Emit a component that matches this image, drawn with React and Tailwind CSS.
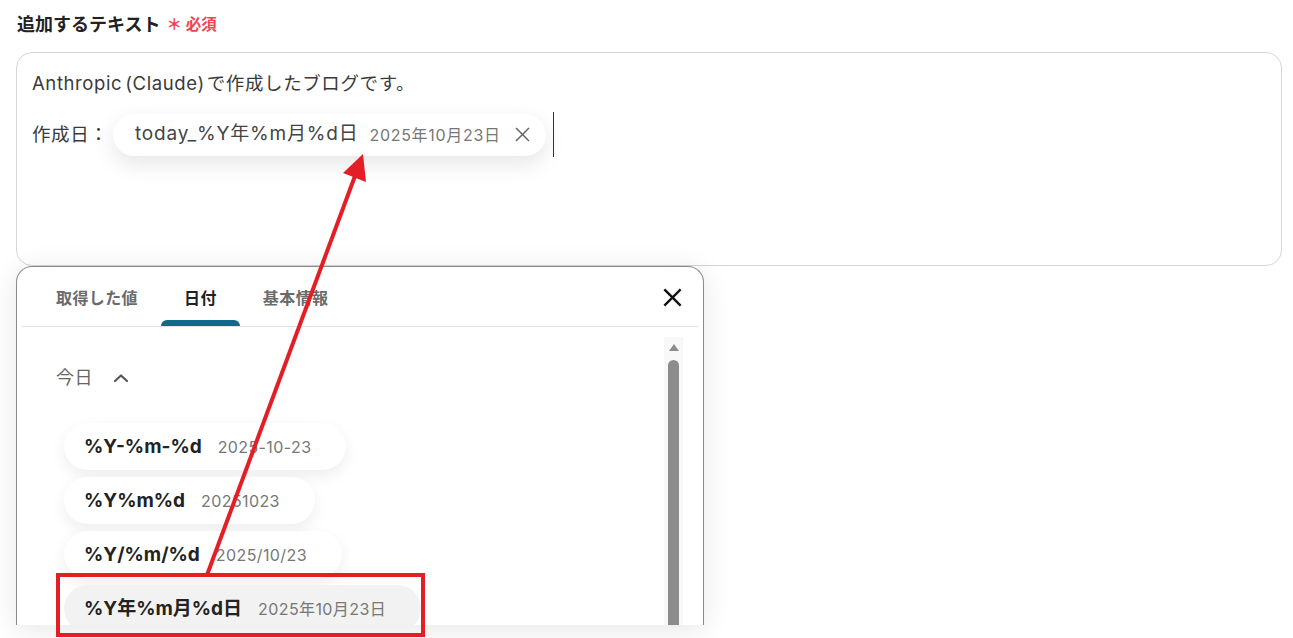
import React from "react";

const font = { fontFamily: 'Inter, "Noto Sans CJK JP", sans-serif' };

function XIcon({ size = 20, stroke = "#222", width = 2 }) {
  return (
    <svg width={size} height={size} viewBox="0 0 20 20" fill="none">
      <path d="M3 3 L17 17 M17 3 L3 17" stroke={stroke} strokeWidth={width} strokeLinecap="square" />
    </svg>
  );
}

function Item({ label, value, selected }) {
  return (
    <div
      className={
        "flex h-[47px] w-fit items-center gap-[16px] rounded-full pl-5 pr-[35px] " +
        (selected
          ? "bg-[#f2f2f2]"
          : "bg-white shadow-[0_6px_16px_rgba(0,0,0,0.07)]")
      }
    >
      <span className="text-[19px] font-bold leading-none text-[#222]">{label}</span>
      <span className="text-[16px] leading-none tracking-[0.4px] text-[#777]">{value}</span>
    </div>
  );
}

export default function App() {
  return (
    <div className="relative h-[638px] w-[1293px] overflow-hidden bg-white pl-4 pt-3" style={font}>
      {/* Label */}
      <div className="flex items-center pl-px leading-[26px]">
        <span className="text-[18px] font-bold text-[#222]">追加するテキスト</span>
        <span className="ml-[6px] text-[15.5px] font-bold text-[#f0434f]">＊ 必須</span>
      </div>

      {/* Main text box */}
      <div className="mt-[14px] h-[214px] w-[1266px] rounded-[16px] border border-[#d6d6d6] bg-white px-[15px] pt-[16px] text-[18.5px] tracking-[0.6px] text-[#3a3a3a]">
        <div className="leading-[28px]">
          Anthropic<span className="ml-[3px] mr-[2px]">(Claude)</span>で作成したブログです。
        </div>
        <div className="mt-[15px] flex items-center">
          <span className="w-[81px]">作成日：</span>
          <div className="flex h-[42px] items-center rounded-full bg-white pl-[22px] pr-[15px] shadow-[0_8px_22px_rgba(0,0,0,0.1)]">
            <span className="text-[19px] tracking-[0.8px] text-[#444]">today_%Y年%m月%d日</span>
            <span className="ml-[11px] text-[16px] tracking-[0.7px] text-[#777]">2025年10月23日</span>
            <span className="ml-[13px] flex items-center">
              <XIcon size={17} stroke="#666" width={1.8} />
            </span>
          </div>
          <div className="ml-[7px] h-[45px] w-[1.5px] bg-[#333]" />
        </div>
      </div>

      {/* Dropdown panel */}
      <div className="h-[359px] w-[688px] overflow-hidden rounded-t-[16px] border border-b-0 border-[#8a8a8a] bg-white shadow-[0_4px_28px_rgba(0,0,0,0.1)]">
        <div className="mx-[5px] flex items-stretch border-b border-[#e3e3e3]">
          <div className="flex pl-[11px]">
            {[
              { t: "取得した値", a: false },
              { t: "日付", a: true },
              { t: "基本情報", a: false },
            ].map((tab) => (
              <div key={tab.t} className="flex flex-col px-[23px]">
                <div
                  className={
                    "flex h-[53px] items-center pt-[9px] text-[16px] font-bold tracking-[0.4px] " +
                    (tab.a ? "text-[#222]" : "text-[#6b6b6b]")
                  }
                >
                  {tab.t}
                </div>
                <div className={"-mx-[23px] h-[6px] rounded-t-[6px] " + (tab.a ? "bg-[#0f6a84]" : "")} />
              </div>
            ))}
          </div>
          <div className="flex-1" />
          <div className="mr-[15px] flex items-center pt-[2px]">
            <XIcon size={21} stroke="#111" width={2.2} />
          </div>
        </div>

        <div className="flex">
          <div className="flex-1 pl-[39px] pt-[37px]">
            <div className="flex items-center gap-[20px] text-[18px] leading-[28px] tracking-[0.5px] text-[#666]">
              <span>今日</span>
              <svg width="16" height="10" viewBox="0 0 16 10" fill="none">
                <path d="M2 8 L8 2.5 L14 8" stroke="#555" strokeWidth="2.2" strokeLinecap="round" strokeLinejoin="round" />
              </svg>
            </div>
            <div className="ml-2 mt-[31px] flex flex-col gap-[7px]">
              <Item label="%Y-%m-%d" value="2025-10-23" />
              <Item label="%Y%m%d" value="20251023" />
              <Item label="%Y/%m/%d" value="2025/10/23" />
              <Item label="%Y年%m月%d日" value="2025年10月23日" selected />
            </div>
          </div>
          <div className="mr-[20px] mt-[10px] flex h-[300px] w-[19px] flex-col items-center bg-[#f8f8f8]">
            <svg width="12" height="9" viewBox="0 0 12 9" className="mt-[6px]">
              <path d="M6 1 L11 8 L1 8 Z" fill="#8c8c8c" />
            </svg>
            <div className="mt-[8px] w-[11px] flex-1 rounded-t-full bg-[#8c8c8c]" />
          </div>
        </div>
      </div>

      {/* Annotations */}
      <div className="absolute left-[56px] top-[573px] h-[64px] w-[369px] border-4 border-[#e31e24]" />
      <svg className="pointer-events-none absolute left-0 top-0" width="1293" height="638">
        <line x1="207" y1="575" x2="355" y2="176" stroke="#e31e24" strokeWidth="4" />
        <polygon points="363,154 343,173 366,182" fill="#e31e24" />
      </svg>
    </div>
  );
}
